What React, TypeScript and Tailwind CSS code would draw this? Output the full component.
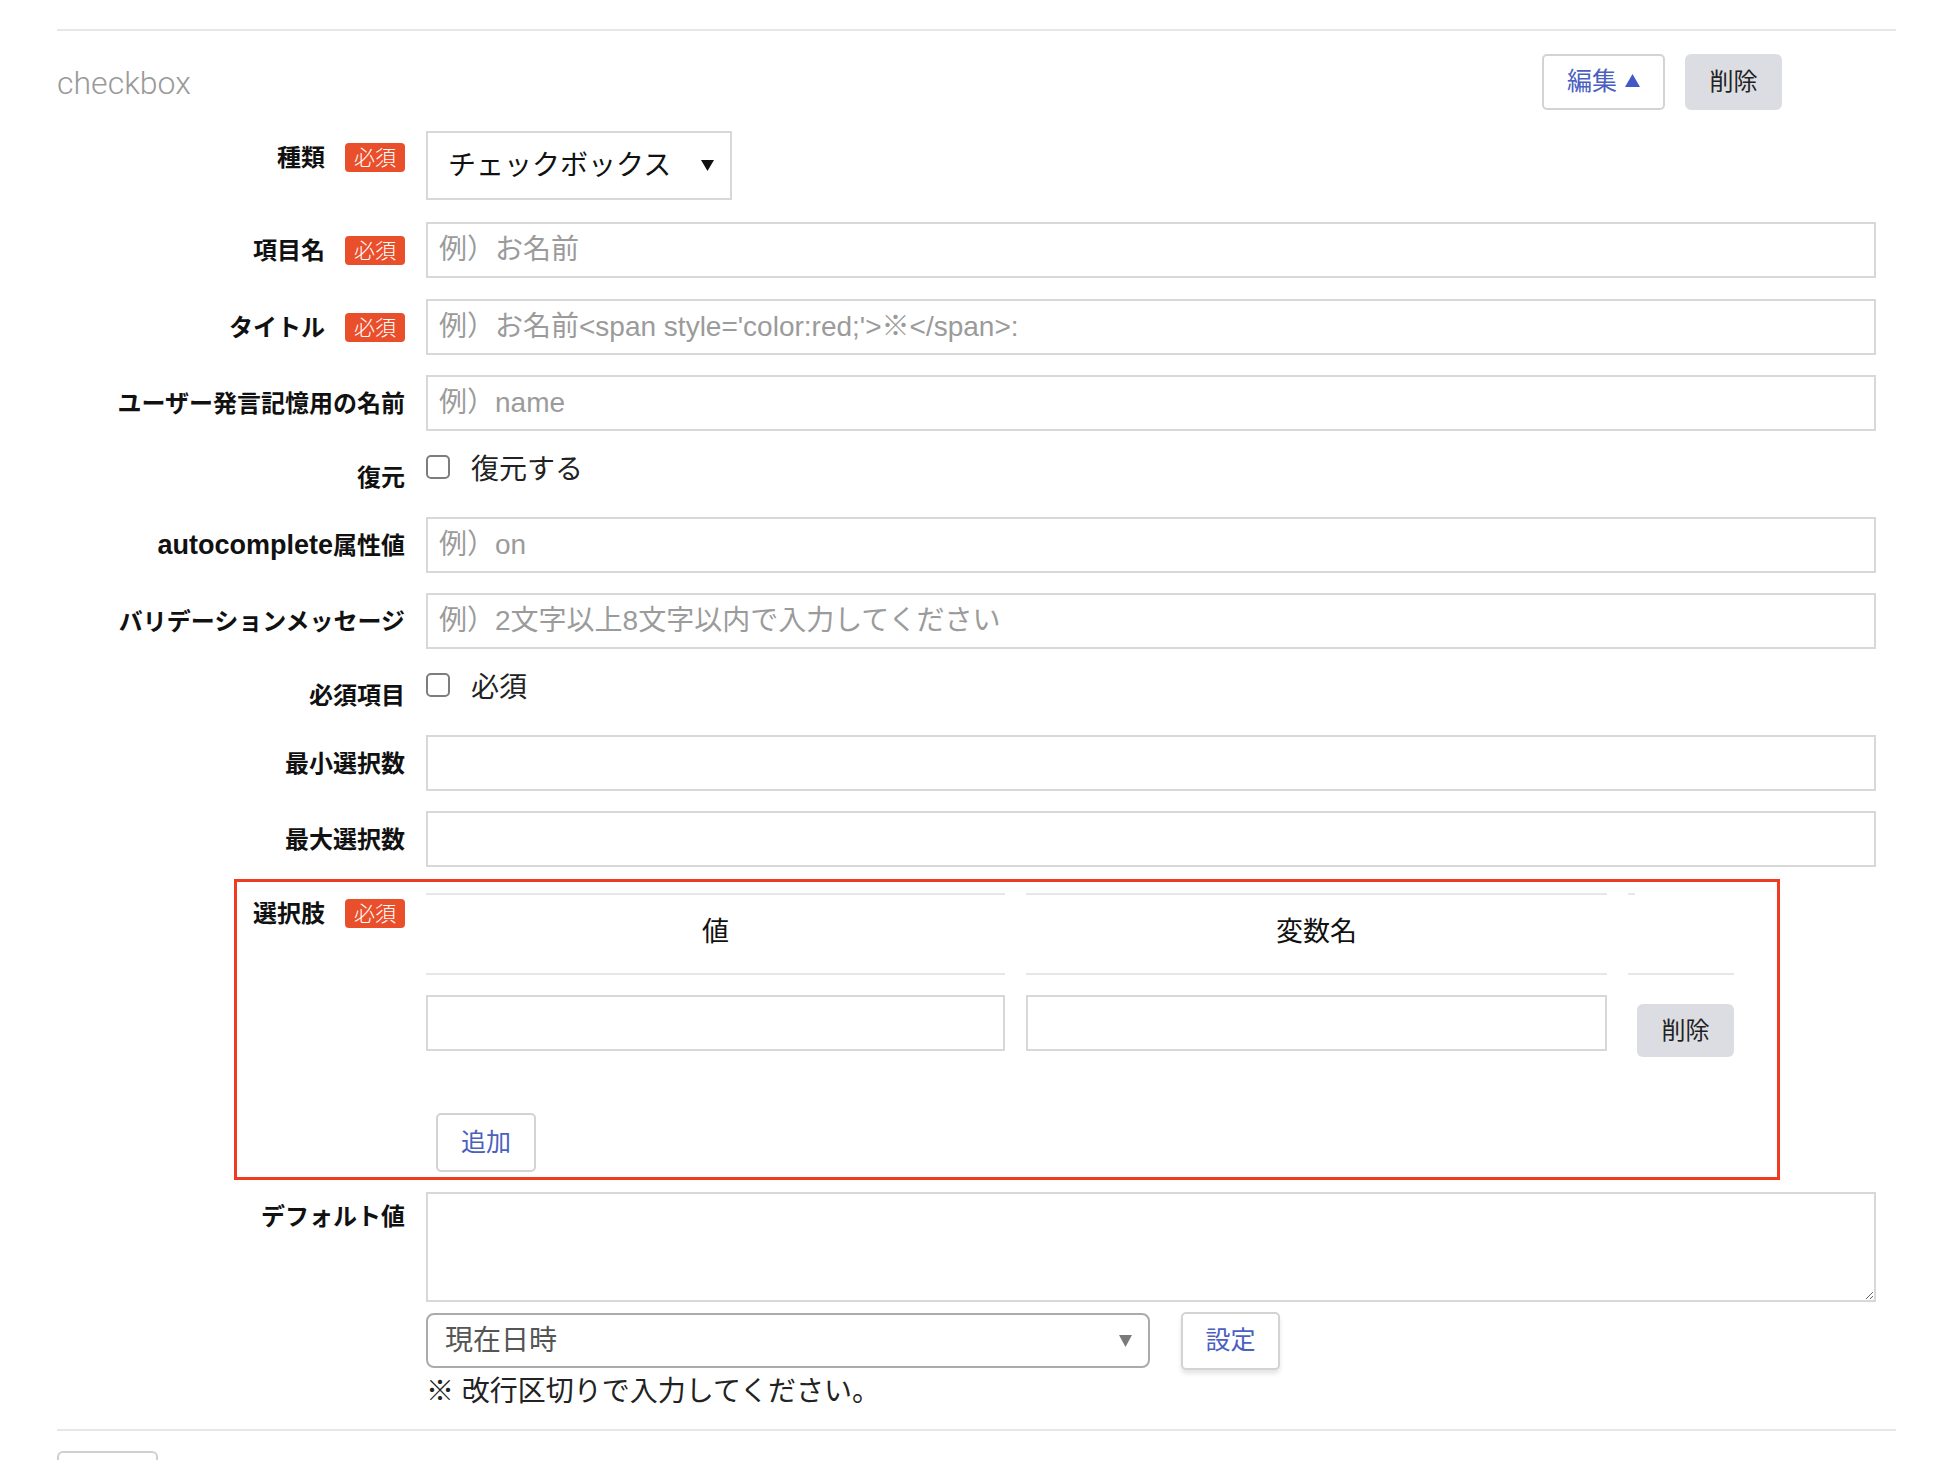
import React from 'react';

const font = { fontFamily: '"Liberation Sans", "Noto Sans CJK JP", sans-serif' };

const Badge: React.FC = () => (
  <span className="inline-flex h-[29px] w-[60px] items-center justify-center rounded-[4px] bg-[#ea4f2c] text-[21px] font-light leading-none text-white">
    必須
  </span>
);

interface LabelProps {
  text: React.ReactNode;
  required?: boolean;
  className?: string;
}

const Label: React.FC<LabelProps> = ({ text, required, className = '' }) => (
  <div className={`flex h-[29px] w-[348px] shrink-0 items-center justify-end gap-[20px] ${className}`}>
    <span className="whitespace-nowrap text-[24px] font-bold leading-none text-[#111]">{text}</span>
    {required && <Badge />}
  </div>
);

const TextInput: React.FC<{ placeholder?: string; className?: string }> = ({ placeholder, className = '' }) => (
  <input
    type="text"
    placeholder={placeholder}
    className={`block h-[56px] w-full border-2 border-[#d8d8d8] bg-white px-[11px] text-[28px] text-[#222] outline-none placeholder:text-[#9b9b9b] ${className}`}
  />
);

const Check: React.FC<{ text: string }> = ({ text }) => (
  <div className="flex h-[30px] items-start gap-[21px]">
    <span className="block h-[24px] w-[24px] rounded-[5px] border-2 border-[#7d7d7d] bg-white" />
    <span className="text-[28px] leading-[30px] text-[#222]">{text}</span>
  </div>
);

const OutlineButton: React.FC<{ children: React.ReactNode; className?: string }> = ({ children, className = '' }) => (
  <button className={`flex items-center justify-center rounded-[5px] border-2 border-[#d3d3d3] bg-white text-[25px] text-[#4b5fc0] ${className}`}>
    {children}
  </button>
);

const GrayButton: React.FC<{ children: React.ReactNode; className?: string }> = ({ children, className = '' }) => (
  <button className={`flex items-center justify-center rounded-[6px] bg-[#dcdde2] text-[24px] text-[#222] ${className}`}>
    {children}
  </button>
);

export default function App() {
  return (
    <div className="min-h-[1460px] w-[1953px] bg-white px-[57px] pt-[29px]" style={font}>
      <div className="h-[2px] bg-[#e7e7e7]" />

      {/* header */}
      <div className="mt-[23px] flex h-[56px] items-center justify-between pr-[114px]">
        <span className="mt-[2px] text-[32px] font-light text-[#9a9a9a]" style={{ fontFamily: 'Roboto, "Liberation Sans", sans-serif' }}>
          checkbox
        </span>
        <div className="flex gap-[20px]">
          <OutlineButton className="h-[56px] w-[123px] gap-[8px]">
            編集
            <svg width="15" height="13" viewBox="0 0 15 13" className="mb-[4px]">
              <path d="M7.5 0 L15 13 L0 13 Z" fill="#4257c9" />
            </svg>
          </OutlineButton>
          <GrayButton className="h-[56px] w-[97px]">削除</GrayButton>
        </div>
      </div>

      <div className="pr-[20px]">
        {/* 種類 */}
        <div className="mt-[21px] flex items-start gap-[21px]">
          <Label text="種類" required className="mt-[12px]" />
          <div className="flex h-[69px] w-[306px] items-center justify-between border-2 border-[#d8d8d8] pl-[20px] pr-[16px] text-[28px] text-[#111]">
            <span>チェックボックス</span>
            <svg width="13" height="11" viewBox="0 0 13 11">
              <path d="M0 0 L13 0 L6.5 11 Z" fill="#111" />
            </svg>
          </div>
        </div>

        <div className="mt-[22px] flex items-start gap-[21px]">
          <Label text="項目名" required className="mt-[14px]" />
          <TextInput placeholder="例）お名前" />
        </div>

        <div className="mt-[21px] flex items-start gap-[21px]">
          <Label text="タイトル" required className="mt-[14px]" />
          <TextInput placeholder="例）お名前<span style='color:red;'>※</span>:" />
        </div>

        <div className="mt-[20px] flex items-start gap-[21px]">
          <Label text="ユーザー発言記憶用の名前" className="mt-[14px]" />
          <TextInput placeholder="例）name" />
        </div>

        <div className="mt-[24px] flex h-[30px] items-start gap-[21px]">
          <Label text="復元" className="mt-[8px]" />
          <Check text="復元する" />
        </div>

        <div className="mt-[32px] flex items-start gap-[21px]">
          <Label
            text={
              <>
                <span className="text-[27px]">autocomplete</span>属性値
              </>
            }
            className="mt-[14px]"
          />
          <TextInput placeholder="例）on" />
        </div>

        <div className="mt-[20px] flex items-start gap-[21px]">
          <Label text="バリデーションメッセージ" className="mt-[14px]" />
          <TextInput placeholder="例）2文字以上8文字以内で入力してください" />
        </div>

        <div className="mt-[24px] flex h-[30px] items-start gap-[21px]">
          <Label text="必須項目" className="mt-[8px]" />
          <Check text="必須" />
        </div>

        <div className="mt-[32px] flex items-start gap-[21px]">
          <Label text="最小選択数" className="mt-[14px]" />
          <TextInput />
        </div>

        <div className="mt-[20px] flex items-start gap-[21px]">
          <Label text="最大選択数" className="mt-[14px]" />
          <TextInput />
        </div>

        {/* 選択肢 */}
        <div className="relative mt-[26px] flex items-start gap-[21px]">
          <div className="pointer-events-none absolute left-[177px] top-[-14px] bottom-[-8px] w-[1546px] border-[3px] border-[#ef3b1f]" />
          <Label text="選択肢" required className="mt-[6px]" />
          <div>
            <div className="grid grid-cols-[579px_581px_106px] gap-x-[21px]">
              <div className="flex h-[82px] items-center justify-center border-y-2 border-[#e7e7e7] pb-[4px] text-[27px] text-[#111]">値</div>
              <div className="flex h-[82px] items-center justify-center border-y-2 border-[#e7e7e7] pb-[4px] text-[27px] text-[#111]">変数名</div>
              <div className="relative h-[82px] border-b-2 border-[#e7e7e7]">
                <div className="h-[2px] w-[7px] bg-[#e7e7e7]" />
              </div>
            </div>
            <div className="mt-[20px] grid grid-cols-[579px_581px_106px] items-start gap-x-[21px]">
              <TextInput className="h-[55px]" />
              <TextInput className="h-[55px]" />
              <div className="flex justify-end">
                <GrayButton className="mt-[9px] h-[53px] w-[97px]">削除</GrayButton>
              </div>
            </div>
            <OutlineButton className="ml-[10px] mt-[56px] h-[59px] w-[100px]">追加</OutlineButton>
          </div>
        </div>

        {/* デフォルト値 */}
        <div className="mt-[20px] flex items-start gap-[21px]">
          <Label text="デフォルト値" className="mt-[10px]" />
          <textarea className="block h-[110px] w-full border-2 border-[#d8d8d8] px-[11px] text-[28px] outline-none" />
        </div>

        <div className="mt-[11px] flex items-start gap-[21px]">
          <div className="w-[348px] shrink-0" />
          <div>
            <div className="flex items-start gap-[31px]">
              <div className="flex h-[55px] w-[724px] items-center justify-between rounded-[8px] border-2 border-[#ababab] pl-[17px] pr-[16px] text-[28px] text-[#555]">
                <span>現在日時</span>
                <svg width="13" height="12" viewBox="0 0 13 12">
                  <path d="M0 0 L13 0 L6.5 12 Z" fill="#7a7a7a" />
                </svg>
              </div>
              <OutlineButton className="-mt-[1px] h-[58px] w-[99px] shadow-[0_4px_4px_rgba(0,0,0,0.1)]">設定</OutlineButton>
            </div>
            <p className="mt-[5px] text-[28px] leading-[34px] text-[#222]">※ 改行区切りで入力してください。</p>
          </div>
        </div>
      </div>

      <div className="mt-[20px] h-[2px] bg-[#e7e7e7]" />
      <div className="mt-[20px] h-[40px] w-[101px] rounded-t-[6px] border-2 border-b-0 border-[#cfcfcf]" />
    </div>
  );
}
